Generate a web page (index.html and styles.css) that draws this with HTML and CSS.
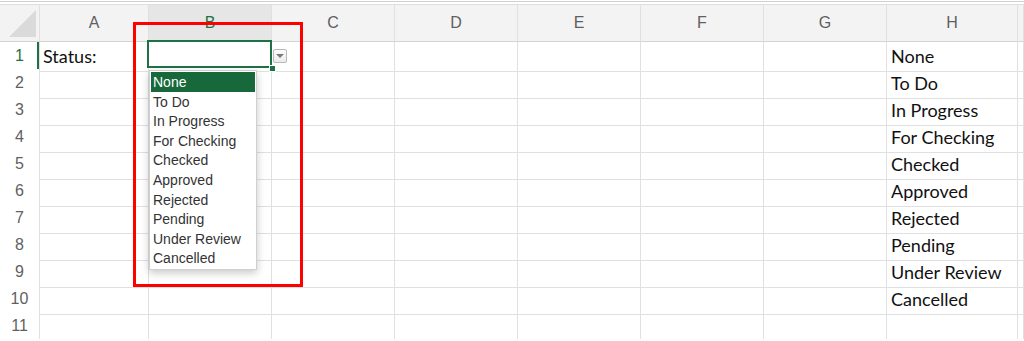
FILE: index.html
```html
<!DOCTYPE html>
<html lang="en">
<head>
    <meta charset="UTF-8">
    <meta name="viewport" content="width=device-width, initial-scale=1.0">
    <title>Status Dropdown</title>
    <link rel="stylesheet" href="styles.css">
</head>
<body>
    <div class="topbar"></div>

    <div class="sheet">
        <!-- Cabecera de columnas -->
        <div class="row head-row">
            <div class="corner">
                <svg width="30" height="30" viewBox="0 0 30 30"><polygon points="2,28 29,28 29,1" fill="#dadada"/></svg>
            </div>
            <div class="col-head">A</div>
            <div class="col-head active">B</div>
            <div class="col-head">C</div>
            <div class="col-head">D</div>
            <div class="col-head">E</div>
            <div class="col-head">F</div>
            <div class="col-head">G</div>
            <div class="col-head">H</div>
            <div class="col-head"></div>
        </div>

        <div class="row">
            <div class="row-head active">1</div>
            <div class="cell">Status:</div>
            <div class="cell selected">
                <span class="drop-btn"></span>
                <ul class="drop-list">
                    <li class="picked">None</li>
                    <li>To Do</li>
                    <li>In Progress</li>
                    <li>For Checking</li>
                    <li>Checked</li>
                    <li>Approved</li>
                    <li>Rejected</li>
                    <li>Pending</li>
                    <li>Under Review</li>
                    <li>Cancelled</li>
                </ul>
            </div>
            <div class="cell"></div><div class="cell"></div><div class="cell"></div><div class="cell"></div><div class="cell"></div>
            <div class="cell">None</div>
            <div class="cell"></div>
        </div>

        <div class="row">
            <div class="row-head">2</div>
            <div class="cell"></div><div class="cell"></div><div class="cell"></div><div class="cell"></div><div class="cell"></div><div class="cell"></div><div class="cell"></div>
            <div class="cell">To Do</div>
            <div class="cell"></div>
        </div>

        <div class="row">
            <div class="row-head">3</div>
            <div class="cell"></div><div class="cell"></div><div class="cell"></div><div class="cell"></div><div class="cell"></div><div class="cell"></div><div class="cell"></div>
            <div class="cell">In Progress</div>
            <div class="cell"></div>
        </div>

        <div class="row">
            <div class="row-head">4</div>
            <div class="cell"></div><div class="cell"></div><div class="cell"></div><div class="cell"></div><div class="cell"></div><div class="cell"></div><div class="cell"></div>
            <div class="cell">For Checking</div>
            <div class="cell"></div>
        </div>

        <div class="row">
            <div class="row-head">5</div>
            <div class="cell"></div><div class="cell"></div><div class="cell"></div><div class="cell"></div><div class="cell"></div><div class="cell"></div><div class="cell"></div>
            <div class="cell">Checked</div>
            <div class="cell"></div>
        </div>

        <div class="row">
            <div class="row-head">6</div>
            <div class="cell"></div><div class="cell"></div><div class="cell"></div><div class="cell"></div><div class="cell"></div><div class="cell"></div><div class="cell"></div>
            <div class="cell">Approved</div>
            <div class="cell"></div>
        </div>

        <div class="row">
            <div class="row-head">7</div>
            <div class="cell"></div><div class="cell"></div><div class="cell"></div><div class="cell"></div><div class="cell"></div><div class="cell"></div><div class="cell"></div>
            <div class="cell">Rejected</div>
            <div class="cell"></div>
        </div>

        <div class="row">
            <div class="row-head">8</div>
            <div class="cell"></div><div class="cell"></div><div class="cell"></div><div class="cell"></div><div class="cell"></div><div class="cell"></div><div class="cell"></div>
            <div class="cell">Pending</div>
            <div class="cell"></div>
        </div>

        <div class="row">
            <div class="row-head">9</div>
            <div class="cell"></div><div class="cell"></div><div class="cell"></div><div class="cell"></div><div class="cell"></div><div class="cell"></div><div class="cell"></div>
            <div class="cell">Under Review</div>
            <div class="cell"></div>
        </div>

        <div class="row">
            <div class="row-head">10</div>
            <div class="cell"></div><div class="cell"></div><div class="cell"></div><div class="cell"></div><div class="cell"></div><div class="cell"></div><div class="cell"></div>
            <div class="cell">Cancelled</div>
            <div class="cell"></div>
        </div>

        <div class="row">
            <div class="row-head">11</div>
            <div class="cell"></div><div class="cell"></div><div class="cell"></div><div class="cell"></div><div class="cell"></div><div class="cell"></div><div class="cell"></div>
            <div class="cell"></div>
            <div class="cell"></div>
        </div>
    </div>

    <!-- Marco rojo de anotacion -->
    <div class="callout"></div>
</body>
</html>
```

FILE: styles.css
```css
body, html {
    margin: 0;
    padding: 0;
}

body {
    background-color: #fff;
    overflow: hidden;
    position: relative;
}

.topbar {
    height: 1px;
    margin-top: 1px;
    margin-bottom: 2px;
    background-color: #cfcfcf;
}

.row {
    display: grid;
    grid-template-columns: 40px 109px repeat(6, 123px) 131px 1fr;
    height: 27px;
}

.row > div {
    box-sizing: border-box;
    border-right: 1px solid #e0e0e0;
    border-bottom: 1px solid #e0e0e0;
}

.head-row {
    height: 38px;
    background-color: #f3f3f3;
    border-top: 1px solid #dedede;
    box-sizing: border-box;
}

.head-row > div {
    border-bottom-color: #d4d4d4;
}

.corner {
    display: flex;
    align-items: flex-end;
    justify-content: flex-end;
    padding: 0 2px 2px 0;
}

.corner svg {
    display: block;
}

.col-head {
    font-family: "Liberation Sans", Arial, sans-serif;
    font-size: 16px;
    color: #5f5f5f;
    text-align: center;
    line-height: 36px;
}

.col-head.active {
    background-color: #e6e6e6;
    color: #1e7145;
}

.row-head {
    font-family: "Liberation Sans", Arial, sans-serif;
    font-size: 16px;
    color: #5f5f5f;
    text-align: center;
    line-height: 28px;
    background-color: #fff;
}

.row-head.active {
    color: #1e7145;
    box-shadow: inset -2px 0 0 #1e7145;
}

.cell {
    font-family: Lato, "Liberation Sans", sans-serif;
    font-size: 18px;
    color: #111;
    padding: 0 0 0 3px;
    line-height: 29px;
    white-space: nowrap;
}

.cell:nth-child(9) {
    padding-left: 4px;
}

/* Celda seleccionada con su lista desplegable */
.selected {
    position: relative;
}

.selected::after {
    content: "";
    position: absolute;
    top: -2px;
    left: -2px;
    width: 125px;
    height: 28px;
    box-sizing: border-box;
    border: 2px solid #1e7145;
}

.selected::before {
    content: "";
    position: absolute;
    left: 120px;
    top: 23px;
    width: 5px;
    height: 5px;
    background-color: #1e7145;
    border: 1px solid #fff;
    z-index: 2;
}

.drop-btn {
    position: absolute;
    left: 124px;
    top: 7px;
    width: 14px;
    height: 14px;
    box-sizing: border-box;
    border: 1px solid #b8b8b8;
    border-radius: 2px;
    background: linear-gradient(#fdfdfd, #ebebeb);
}

.drop-btn::after {
    content: "";
    position: absolute;
    left: 2px;
    top: 4px;
    border-left: 4px solid transparent;
    border-right: 4px solid transparent;
    border-top: 4px solid #7a7a7a;
}

.drop-list {
    position: absolute;
    left: 0;
    top: 28px;
    width: 108px;
    margin: 0;
    padding: 1px;
    list-style: none;
    box-sizing: border-box;
    background-color: #fff;
    border: 1px solid #d0d0d0;
    box-shadow: 0 3px 8px rgba(0, 0, 0, 0.22);
    z-index: 3;
}

.drop-list li {
    font-family: "Liberation Sans", Arial, sans-serif;
    font-size: 14px;
    color: #333;
    height: 19.6px;
    line-height: 20px;
    padding-left: 2px;
}

.drop-list li.picked {
    background-color: #17683a;
    color: #fff;
}

.callout {
    position: absolute;
    left: 133px;
    top: 22px;
    width: 170px;
    height: 265px;
    box-sizing: border-box;
    border: 3px solid #ff0000;
    z-index: 5;
}
```
